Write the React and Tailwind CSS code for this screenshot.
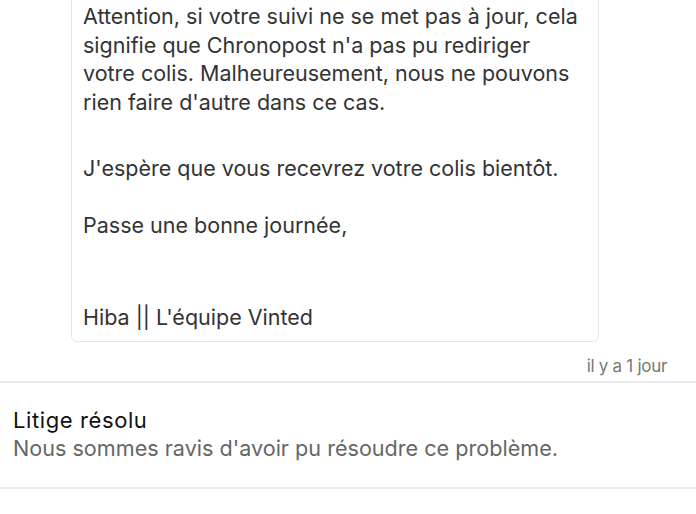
import React from "react";

const lines = [
  "Attention, si votre suivi ne se met pas à jour, cela signifie que Chronopost n'a pas pu rediriger votre colis. Malheureusement, nous ne pouvons rien faire d'autre dans ce cas.",
];

export default function App() {
  return (
    <div className="w-[696px] h-[514px] overflow-hidden bg-white font-['Inter',sans-serif]">
      {/* message bubble, scrolled so its top is off screen */}
      <div className="-mt-[15px] pl-[71px] pr-[97px]">
        <div className="border border-[#e6e6e6] rounded-md bg-white pt-4 pb-[9px] pl-[11px] pr-3 text-[21.5px] leading-[28.5px] text-[#333]">
          <p className="w-[505px]">{lines[0]}</p>
          <p className="mt-[38px]">J'espère que vous recevrez votre colis bientôt.</p>
          <p className="mt-[28px]">Passe une bonne journée,</p>
          <p className="mt-[64px]">Hiba || L'équipe Vinted</p>
        </div>
      </div>
      <div className="flex justify-end pr-[29px] pt-[14px] pb-[5px]">
        <span className="text-[17px] leading-5 text-[#777] tracking-[-0.3px]">il y a 1 jour</span>
      </div>
      <div className="border-t-2 border-[#ebebeb] px-[13px] pt-[23px] pb-[25px]">
        <div className="text-[22px] leading-[28px] text-[#111] tracking-[0.6px]">Litige résolu</div>
        <div className="text-[21.6px] leading-[28px] text-[#666]">
          Nous sommes ravis d'avoir pu résoudre ce problème.
        </div>
      </div>
      <div className="border-t-2 border-[#ebebeb]" />
    </div>
  );
}
